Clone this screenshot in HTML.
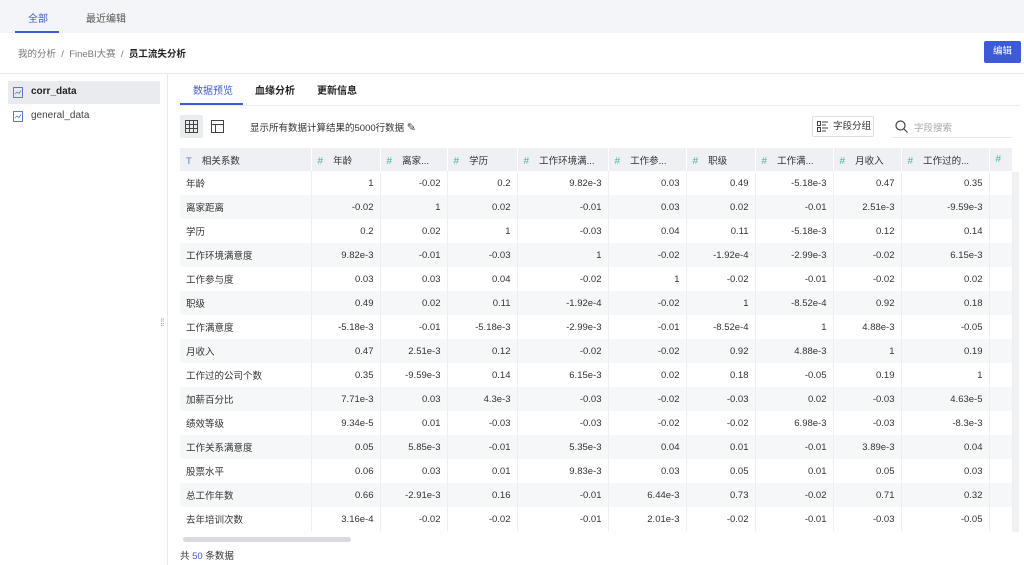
<!DOCTYPE html>
<html><head><meta charset="utf-8"><style>
*{margin:0;padding:0;box-sizing:border-box}
body{width:1024px;height:565px;overflow:hidden;background:#fff;font-family:"Liberation Sans","Noto Sans CJK SC",sans-serif;font-size:10px;color:#333;position:relative}
.abs{position:absolute}
.topbar{left:0;top:0;width:1024px;height:33px;background:#f4f5f8}
table{border-collapse:collapse;table-layout:fixed;position:absolute;left:180px;top:148px;width:832px}
td,th{height:24px;border-right:1px solid #eceef1;white-space:nowrap;overflow:hidden;font-weight:normal;padding:0 6px;font-size:9.5px}
th{height:23px;background:#eef0f4;text-align:left;color:#333;border-right:1px solid #fff}
td{text-align:right}
td:first-child{text-align:left}
tr:nth-child(odd) td{background:#f6f7f9}
.h{color:#4cb89a;margin-right:10px;font-size:10px}
</style></head><body>
<div class="abs topbar"></div>
<div class="abs" style="left:28px;top:10px;color:#3d5bd6;font-size:10px">全部</div>
<div class="abs" style="left:15px;top:31px;width:44px;height:2px;background:#3d5bd6"></div>
<div class="abs" style="left:86px;top:10px;color:#555;font-size:10px">最近编辑</div>
<div class="abs" style="left:18px;top:46px;color:#777;font-size:9.5px">我的分析 &nbsp;/&nbsp; FineBI大赛 &nbsp;/&nbsp; <b style="color:#222">员工流失分析</b></div>
<div class="abs" style="left:984px;top:41px;width:37px;height:22px;background:#3d5bd6;border-radius:2px;color:#fff;text-align:center;line-height:22px;font-size:9.5px">编辑</div>
<div class="abs" style="left:0;top:73px;width:1024px;height:1px;background:#e8e9ec"></div>
<div class="abs" style="left:167px;top:74px;width:1px;height:491px;background:#e8e9ec"></div>
<div class="abs" style="left:8px;top:81px;width:152px;height:23px;background:#e9ebef"></div>
<svg class="abs" style="left:13px;top:87px" width="10" height="11"><rect x="0.5" y="0.5" width="9" height="10" fill="none" stroke="#5b7bd5"/><path d="M2 7l2-2 2 1.5 2-3" fill="none" stroke="#5b7bd5" stroke-width="0.8"/></svg>
<div class="abs" style="left:31px;top:86px;font-weight:bold;color:#222;font-size:10px">corr_data</div>
<svg class="abs" style="left:13px;top:111px" width="10" height="11"><rect x="0.5" y="0.5" width="9" height="10" fill="none" stroke="#5b7bd5"/><path d="M2 7l2-2 2 1.5 2-3" fill="none" stroke="#5b7bd5" stroke-width="0.8"/></svg>
<div class="abs" style="left:31px;top:110px;color:#444;font-size:10px">general_data</div>
<div class="abs" style="left:160px;top:318px;color:#999;font-size:10px;letter-spacing:-1px">⁞⁞</div>
<div class="abs" style="left:193px;top:82px;color:#3d5bd6;font-size:10px">数据预览</div>
<div class="abs" style="left:255px;top:82px;color:#222;font-size:10px;font-weight:bold">血缘分析</div>
<div class="abs" style="left:317px;top:82px;color:#222;font-size:10px;font-weight:bold">更新信息</div>
<div class="abs" style="left:180px;top:103px;width:63px;height:2px;background:#3d5bd6"></div>
<div class="abs" style="left:180px;top:105px;width:840px;height:1px;background:#eceef1"></div>
<div class="abs" style="left:180px;top:115px;width:23px;height:23px;background:#e9ebef;border-radius:2px"></div>
<svg class="abs" style="left:185px;top:120px" width="13" height="13"><rect x="0.5" y="0.5" width="12" height="12" fill="none" stroke="#444"/><path d="M0 4.5h13M0 8.5h13M4.5 0v13M8.5 0v13" stroke="#444"/></svg>
<svg class="abs" style="left:211px;top:120px" width="13" height="13"><rect x="0.5" y="0.5" width="12" height="12" fill="none" stroke="#444"/><path d="M0 4.5h13M4.5 4.5v9" stroke="#444"/></svg>
<div class="abs" style="left:250px;top:120px;font-size:9.5px;color:#333">显示所有数据计算结果的5000行数据 <span style="font-size:11px">✎</span></div>
<div class="abs" style="left:812px;top:116px;width:62px;height:21px;border:1px solid #dcdee3;border-radius:2px;font-size:9.5px;line-height:19px;padding-left:20px;color:#333">字段分组</div>
<svg class="abs" style="left:817px;top:121px" width="11" height="11"><path d="M0.5 0.5h3v4h-3zM0.5 6.5h3v4h-3zM5 1h6M5 4h4M5 7h6M5 10h4" fill="none" stroke="#444"/></svg>
<svg class="abs" style="left:895px;top:120px" width="13" height="13"><circle cx="5.5" cy="5.5" r="4.5" fill="none" stroke="#444" stroke-width="1.2"/><path d="M9 9l3.5 3.5" stroke="#444" stroke-width="1.2"/></svg>
<div class="abs" style="left:914px;top:120px;font-size:9.5px;color:#aaa">字段搜索</div>
<div class="abs" style="left:892px;top:137px;width:120px;height:1px;background:#e6e8ec"></div>
<table>
<colgroup><col style="width:131px"><col style="width:69px"><col style="width:67px"><col style="width:70px"><col style="width:91px"><col style="width:78px"><col style="width:69px"><col style="width:78px"><col style="width:68px"><col style="width:88px"><col style="width:23px"></colgroup>
<tr><th><span style="color:#5b7bd5;margin-right:10px">T</span>相关系数</th><th><span class="h">#</span>年龄</th><th><span class="h">#</span>离家...</th><th><span class="h">#</span>学历</th><th><span class="h">#</span>工作环境满...</th><th><span class="h">#</span>工作参...</th><th><span class="h">#</span>职级</th><th><span class="h">#</span>工作满...</th><th><span class="h">#</span>月收入</th><th><span class="h">#</span>工作过的...</th><th><span class="h">#</span></th></tr>
<tr><td>年龄</td><td>1</td><td>-0.02</td><td>0.2</td><td>9.82e-3</td><td>0.03</td><td>0.49</td><td>-5.18e-3</td><td>0.47</td><td>0.35</td><td></td></tr>
<tr><td>离家距离</td><td>-0.02</td><td>1</td><td>0.02</td><td>-0.01</td><td>0.03</td><td>0.02</td><td>-0.01</td><td>2.51e-3</td><td>-9.59e-3</td><td></td></tr>
<tr><td>学历</td><td>0.2</td><td>0.02</td><td>1</td><td>-0.03</td><td>0.04</td><td>0.11</td><td>-5.18e-3</td><td>0.12</td><td>0.14</td><td></td></tr>
<tr><td>工作环境满意度</td><td>9.82e-3</td><td>-0.01</td><td>-0.03</td><td>1</td><td>-0.02</td><td>-1.92e-4</td><td>-2.99e-3</td><td>-0.02</td><td>6.15e-3</td><td></td></tr>
<tr><td>工作参与度</td><td>0.03</td><td>0.03</td><td>0.04</td><td>-0.02</td><td>1</td><td>-0.02</td><td>-0.01</td><td>-0.02</td><td>0.02</td><td></td></tr>
<tr><td>职级</td><td>0.49</td><td>0.02</td><td>0.11</td><td>-1.92e-4</td><td>-0.02</td><td>1</td><td>-8.52e-4</td><td>0.92</td><td>0.18</td><td></td></tr>
<tr><td>工作满意度</td><td>-5.18e-3</td><td>-0.01</td><td>-5.18e-3</td><td>-2.99e-3</td><td>-0.01</td><td>-8.52e-4</td><td>1</td><td>4.88e-3</td><td>-0.05</td><td></td></tr>
<tr><td>月收入</td><td>0.47</td><td>2.51e-3</td><td>0.12</td><td>-0.02</td><td>-0.02</td><td>0.92</td><td>4.88e-3</td><td>1</td><td>0.19</td><td></td></tr>
<tr><td>工作过的公司个数</td><td>0.35</td><td>-9.59e-3</td><td>0.14</td><td>6.15e-3</td><td>0.02</td><td>0.18</td><td>-0.05</td><td>0.19</td><td>1</td><td></td></tr>
<tr><td>加薪百分比</td><td>7.71e-3</td><td>0.03</td><td>4.3e-3</td><td>-0.03</td><td>-0.02</td><td>-0.03</td><td>0.02</td><td>-0.03</td><td>4.63e-5</td><td></td></tr>
<tr><td>绩效等级</td><td>9.34e-5</td><td>0.01</td><td>-0.03</td><td>-0.03</td><td>-0.02</td><td>-0.02</td><td>6.98e-3</td><td>-0.03</td><td>-8.3e-3</td><td></td></tr>
<tr><td>工作关系满意度</td><td>0.05</td><td>5.85e-3</td><td>-0.01</td><td>5.35e-3</td><td>0.04</td><td>0.01</td><td>-0.01</td><td>3.89e-3</td><td>0.04</td><td></td></tr>
<tr><td>股票水平</td><td>0.06</td><td>0.03</td><td>0.01</td><td>9.83e-3</td><td>0.03</td><td>0.05</td><td>0.01</td><td>0.05</td><td>0.03</td><td></td></tr>
<tr><td>总工作年数</td><td>0.66</td><td>-2.91e-3</td><td>0.16</td><td>-0.01</td><td>6.44e-3</td><td>0.73</td><td>-0.02</td><td>0.71</td><td>0.32</td><td></td></tr>
<tr><td>去年培训次数</td><td>3.16e-4</td><td>-0.02</td><td>-0.02</td><td>-0.01</td><td>2.01e-3</td><td>-0.02</td><td>-0.01</td><td>-0.03</td><td>-0.05</td><td></td></tr>
</table>
<div class="abs" style="left:1013px;top:172px;width:6px;height:360px;background:#f0f1f3"></div>
<div class="abs" style="left:183px;top:537px;width:168px;height:5px;background:#d8dadd;border-radius:3px"></div>
<div class="abs" style="left:180px;top:548px;font-size:9.5px;color:#333">共 <span style="color:#3d5bd6">50</span> 条数据</div>
</body></html>
